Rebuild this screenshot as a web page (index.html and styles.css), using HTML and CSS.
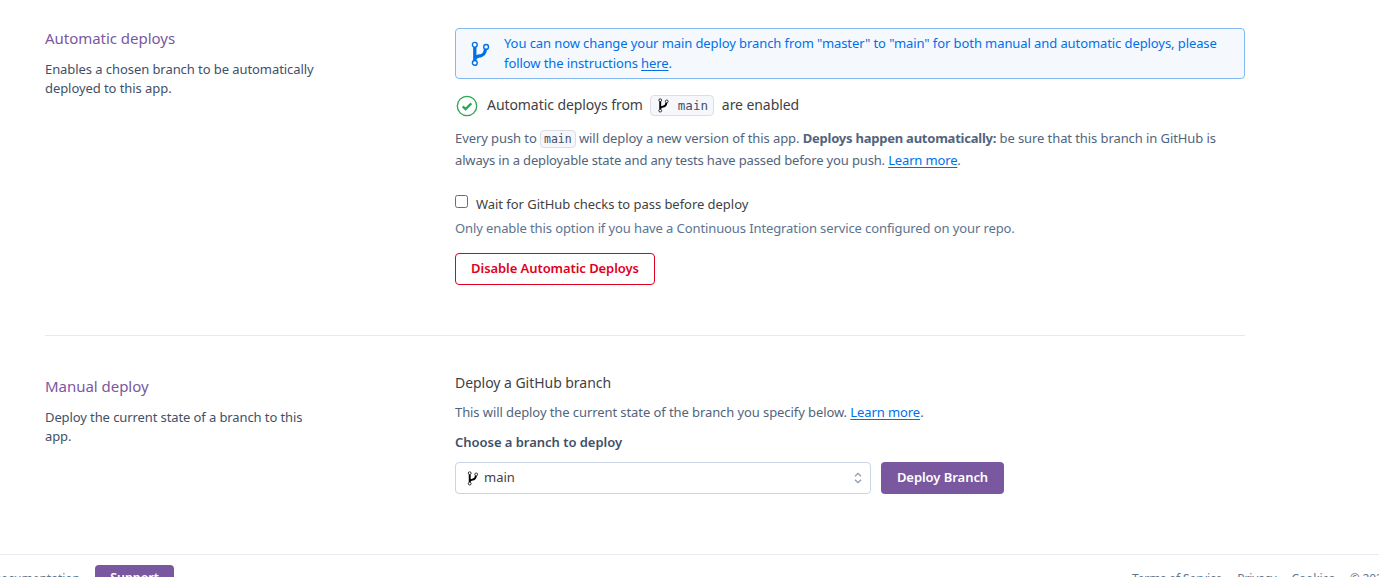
FILE: index.html
```html
<!DOCTYPE html>
<html lang="en">
<head>
<meta charset="utf-8">
<title>Deploy</title>
<link rel="stylesheet" href="styles.css">
</head>
<body>
<svg class="defs" width="0" height="0" aria-hidden="true">
  <symbol id="branch" viewBox="0 0 18 26">
    <path d="M3.3 6.2V19.6M3.3 18C4.3 15.4 6.5 15.3 9 14.8C12.6 14 13.6 11.5 14 8.4" fill="none" stroke="currentColor" stroke-width="3.3"/>
    <g fill="#fff" stroke="currentColor" stroke-width="1.4">
      <circle cx="3.3" cy="3.8" r="2.4"/>
      <circle cx="3.3" cy="21.9" r="2.4"/>
      <circle cx="14.6" cy="5.9" r="2.4"/>
    </g>
  </symbol>
</svg>
<main class="page">
  <section class="row auto">
    <div class="side">
      <h2 class="title">Automatic deploys</h2>
      <p class="desc"><span class="tight-7">Enables a chosen branch to be automatically</span><br><span class="tight-7">deployed to this app.</span></p>
    </div>
    <div class="content">
      <div class="alert">
        <svg class="alert-icon"><use href="#branch"/></svg>
        <p class="alert-text">You can now change your main deploy branch from "master" to "main" for both manual and automatic deploys, please<br>follow the instructions <a href="#">here</a>.</p>
      </div>
      <div class="status">
        <svg class="check" viewBox="0 0 22 22"><circle cx="11" cy="11" r="9.7"/><path d="M6.7 11.4L9.6 14.1L15.3 8.4"/></svg>
        <span class="status-text">Automatic deploys from</span>
        <span class="pill"><svg class="pill-icon"><use href="#branch"/></svg>main</span>
        <span class="status-text">are enabled</span>
      </div>
      <p class="info">Every push to <code>main</code> will deploy a new version of this app. <b>Deploys happen automatically:</b> be sure that this branch in GitHub is<br><span class="tight-15">always in a deployable state and any tests have passed before you push. <a href="#">Learn more</a>.</span></p>
      <label class="option"><input class="box" type="checkbox"><span class="option-text">Wait for GitHub checks to pass before deploy</span></label>
      <p class="hint">Only enable this option if you have a Continuous Integration service configured on your repo.</p>
      <button class="btn danger">Disable Automatic Deploys</button>
    </div>
  </section>
  <section class="row manual">
    <div class="side">
      <h2 class="title">Manual deploy</h2>
      <p class="desc"><span class="tight-10">Deploy the current state of a branch to this</span><br><span class="tight-10">app.</span></p>
    </div>
    <div class="content">
      <h3 class="subtitle">Deploy a GitHub branch</h3>
      <p class="note">This will deploy the current state of the branch you specify below. <a href="#">Learn more</a>.</p>
      <p class="choose">Choose a branch to deploy</p>
      <div class="form">
        <div class="select"><svg class="select-icon"><use href="#branch"/></svg><span>main</span>
          <svg class="arrows" viewBox="0 0 8 12"><path d="M1 4.2L4 1.3L7 4.2M1 7.8L4 10.7L7 7.8"/></svg></div>
        <button class="btn primary">Deploy Branch</button>
      </div>
    </div>
  </section>
</main>
<footer class="footer">
  <div class="foot-left"><span>Documentation</span><button class="btn primary support">Support</button></div>
  <div class="foot-right"><span>Terms of Service</span><span class="privacy">Privacy</span><span>Cookies</span><span>© 2022</span></div>
</footer>
</body>
</html>
```
FILE: styles.css
```css
* { box-sizing: border-box; }
html, body { height: 100%; }
body { margin: 0; height: 577px; overflow: hidden; background: #fff; color: #3f3f44; font: 13px/20px "Noto Sans", "Open Sans", sans-serif; display: flex; flex-direction: column; }
h2, h3, p { margin: 0; font-weight: 400; }
a { color: #0070e8; text-underline-offset: 2px; }
svg { flex: none; display: block; }
.defs { position: absolute; }
.tight-7 { letter-spacing: -0.07px; }
.tight-10 { letter-spacing: -0.1px; }
.tight-15 { letter-spacing: -0.15px; }
.page { height: 554px; flex: none; margin-left: 45px; width: 1200px; }
.row { display: grid; grid-template-columns: 410px 790px; white-space: nowrap; }
.auto { height: 336px; padding-top: 28px; border-bottom: 1px solid #e8e8ef; }
.manual { padding-top: 28px; }
.title { color: #79589f; font-size: 15px; line-height: 20px; letter-spacing: -0.03px; }
.desc { color: #3f5069; line-height: 19px; margin-top: 12px; }
.manual .title { margin-top: 12px; }
.alert { display: flex; height: 51px; border: 1px solid #82b9f1; border-radius: 4px; background: #f5f9fe; color: #0070e8; padding: 4px 15px; letter-spacing: -0.088px; }
.alert-icon { width: 19px; height: 26px; margin: 8px 14px 0 0; }
.status { display: flex; align-items: center; height: 22px; margin-top: 15px; font-size: 14px; }
.status-text { letter-spacing: -0.07px; }
.check { width: 22px; height: 22px; margin: 1px 9px 0 1px; fill: none; stroke: #2ba552; stroke-width: 1.3; }
.check path { stroke-width: 2.2; }
.pill { display: flex; align-items: center; width: 64px; height: 21px; margin: 0 8px 0 7px; padding-left: 7px; border: 1px solid #dcdee5; border-radius: 4px; background: #f6f7fb; color: #3f5069; font: 12.5px/19px "DejaVu Sans Mono", monospace; }
.pill-icon { width: 11px; height: 15px; margin-right: 9px; color: #000; }
.info { margin-top: 11px; line-height: 22px; color: #52647c; letter-spacing: -0.085px; }
.info b { font-weight: 700; letter-spacing: -0.23px; }
code { display: inline-block; height: 18px; border: 1px solid #dcdee5; border-radius: 4px; background: #f6f7fb; color: #3f5069; padding: 0 3px; font: 11.5px/16px "DejaVu Sans Mono", monospace; letter-spacing: 0; }
.option { display: flex; height: 20px; margin-top: 23px; }
.option-text { letter-spacing: -0.04px; }
.box { appearance: none; width: 13px; height: 13px; margin: 1px 8px 0 0; border: 1px solid #6b6b70; border-radius: 2.5px; background: #fff; }
.hint { margin-top: 4px; color: #5c7390; letter-spacing: -0.105px; }
.btn { display: flex; flex: none; align-items: center; justify-content: center; height: 32px; padding: 0; border-radius: 4px; border: 0; font: 600 13px/20px "Noto Sans", "Open Sans", sans-serif; }
.danger { width: 200px; margin-top: 15px; padding-bottom: 2px; background: #fff; border: 1px solid #e00020; color: #e00020; letter-spacing: -0.07px; }
.primary { width: 123px; background: #79589f; color: #fff; }
.subtitle { font-size: 14px; line-height: 20px; margin-top: 9px; letter-spacing: -0.04px; }
.note { margin-top: 9px; color: #52647c; letter-spacing: -0.085px; }
.choose { margin-top: 10px; color: #3f5069; font-weight: 600; letter-spacing: -0.03px; }
.form { display: flex; gap: 10px; margin-top: 10px; }
.form .primary { padding-bottom: 2px; letter-spacing: -0.05px; }
.select { display: flex; align-items: center; width: 416px; height: 32px; border: 1px solid #c9d4e5; border-radius: 4px; padding: 0 8px 0 11px; }
.select span { margin-top: -2px; }
.select-icon { width: 12px; height: 15px; margin-right: 5px; color: #000; }
.arrows { width: 8px; height: 12px; margin-left: auto; fill: none; stroke: #8b9bb0; stroke-width: 1.3; }
.footer { flex: none; height: 23px; border-top: 1px solid #e8e8f1; display: flex; justify-content: space-between; color: #62758f; white-space: nowrap; font-size: 12px; overflow: hidden; }
.foot-left { display: flex; width: 174px; padding-top: 10px; justify-content: flex-end; align-items: flex-start; gap: 15px; line-height: 28px; }
.support { width: 79px; height: 26px; font-size: 12.5px; }
.foot-right { display: flex; width: 247px; padding-top: 14px; gap: 15px; letter-spacing: -0.12px; }
```
